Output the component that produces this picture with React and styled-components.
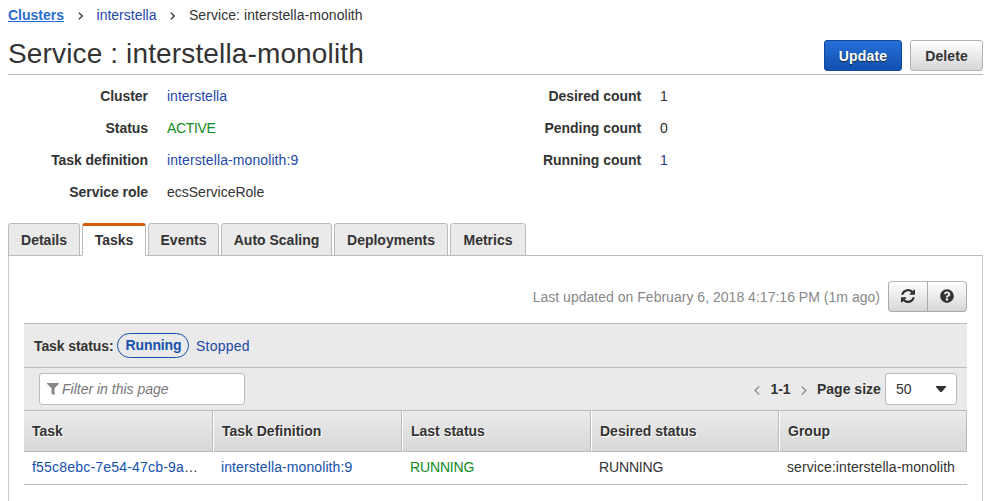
import React from "react";
import styled, { createGlobalStyle } from "styled-components";
import { FaQuestionCircle, FaFilter } from "react-icons/fa";

const GlobalStyle = createGlobalStyle`
  * { box-sizing: border-box; }
  html, body { margin: 0; background: #fff; overflow: hidden; }
  body {
    font-family: "Liberation Sans", Arial, sans-serif;
    font-size: 14px;
    line-height: 20px;
    color: #333;
  }
  button, input { font: inherit; color: inherit; }
`;

const Page = styled.div`
  width: 994px;
  height: 501px;
  padding: 5px 11px 0 8px;
  overflow: hidden;
  display: flex;
  flex-direction: column;
  & > * { flex-shrink: 0; }
`;

const Text = styled.span`
  letter-spacing: ${(p) => p.$ls || 0}px;
  white-space: nowrap;
`;

const Link = styled.a`
  color: ${(p) => p.$color || "#1e47a8"};
  text-decoration: none;
  white-space: nowrap;
  letter-spacing: ${(p) => p.$ls || 0}px;
`;

const HomeLink = styled(Link)`
  color: #2a6bd4;
  font-weight: bold;
  text-decoration: underline;
`;

const Breadcrumbs = styled.nav`
  display: flex;
  align-items: center;
  height: 20px;
`;

const Separator = styled.svg`
  width: 5px;
  height: 8px;
  margin: 2px 14px 0 13.5px;
  fill: none;
  stroke: #333;
  stroke-width: 1.3;
`;

const TitleBar = styled.header`
  display: flex;
  justify-content: space-between;
  height: 50px;
  padding-top: 15px;
  border-bottom: 1px solid #bbb;
`;

const Title = styled.h1`
  margin: -6px 0 0;
  font-size: 28px;
  line-height: 40px;
  font-weight: normal;
  white-space: nowrap;
  letter-spacing: 0.14px;
`;

const Actions = styled.div`
  display: flex;
  gap: 8px;
`;

const Button = styled.button`
  width: ${(p) => p.$w}px;
  height: 31px;
  padding: 1px 0 0;
  border: 1px solid #b3b3b3;
  border-radius: 3px;
  background: linear-gradient(#fff, #d6d6d6);
  font-weight: bold;
  letter-spacing: ${(p) => p.$ls || 0}px;
`;

const PrimaryButton = styled(Button)`
  border-color: #0f479f;
  background: linear-gradient(#2670d8, #1150af);
  color: #fff;
  text-shadow: 0 1px 1px #222;
`;

const Facts = styled.section`
  display: flex;
  height: 148px;
  padding-top: 11px;
`;

const FactList = styled.dl`
  display: grid;
  grid-template-columns: ${(p) => p.$label}px 326px;
  grid-auto-rows: 32px;
  column-gap: 19px;
  margin: 0;
  align-content: start;
`;

const FactName = styled.dt`
  font-weight: bold;
  text-align: right;
  letter-spacing: -0.06px;
`;

const FactValue = styled.dd`
  margin: 0;
  color: ${(p) => p.$color || "#333"};
  letter-spacing: ${(p) => p.$ls || 0}px;
`;

const Tabs = styled.nav`
  display: flex;
  gap: 2px;
  height: 33px;
  margin-bottom: -1px;
  z-index: 1;
`;

const Tab = styled.button`
  width: ${(p) => p.$w}px;
  padding: ${(p) => (p.$active ? "0 0 1px" : "1px 0 0")};
  border: 1px solid #bbb;
  border-top: ${(p) => (p.$active ? "3px solid #d45b07" : "1px solid #bbb")};
  border-bottom-color: ${(p) => (p.$active ? "#fff" : "#bbb")};
  border-radius: 3px 3px 0 0;
  background: ${(p) => (p.$active ? "#fff" : "#eaeaea")};
  font-weight: bold;
  white-space: nowrap;
`;

const Panel = styled.main`
  height: 260px;
  padding: 25px 15px 0;
  border: 1px solid #bbb;
  border-color: #bbb #ccc;
`;

const UpdatedRow = styled.div`
  display: flex;
  justify-content: flex-end;
  align-items: center;
  gap: 8px;
  height: 31px;
  color: #888;
`;

const IconGroup = styled.div`
  display: flex;
  width: 79px;
  height: 31px;
  border: 1px solid #aaa;
  border-top-color: #bbb;
  border-radius: 4px;
  background: linear-gradient(#fff, #d6d6d6);
`;

const IconButton = styled.button`
  display: flex;
  flex: 1;
  align-items: center;
  justify-content: center;
  padding: 0 0 1px;
  border: 0;
  background: none;
  color: #333;
  & + & { border-left: 1px solid #aaa; }
  svg { width: 14px; height: 14px; }
`;

const StatusBar = styled.div`
  display: flex;
  align-items: center;
  height: 44px;
  margin-top: 11px;
  padding-left: 10px;
  border-top: 1px solid #bbb;
  background: #eaeaea;
`;

const StatusLabel = styled.strong`
  width: 83px;
  padding-top: 1px;
  white-space: nowrap;
  letter-spacing: -0.1px;
`;

const StatusPill = styled.button`
  width: 72px;
  height: 25px;
  margin: 0 7px 1px 0;
  padding: 0 0 0 1px;
  border: 1px solid #1652ad;
  border-radius: 13px;
  background: none;
  color: #1652ad;
  font-weight: bold;
  letter-spacing: -0.1px;
`;

const FilterBar = styled.div`
  display: flex;
  justify-content: space-between;
  height: 43px;
  padding: 5px 10px 0 15px;
  border-top: 1px solid #bbb;
  background: #eaeaea;
`;

const FilterField = styled.label`
  display: flex;
  align-items: center;
  gap: 3px;
  width: 206px;
  height: 32px;
  padding: 0 7px;
  border: 1px solid #bbb;
  border-radius: 3px;
  background: #fff;
  color: #777;
  font-style: italic;
  svg { width: 12px; height: 12px; color: #888; margin-bottom: 1px; }
`;

const Pager = styled.div`
  display: flex;
  align-items: center;
  height: 32px;
  font-weight: bold;
`;

const PageArrow = styled.svg`
  width: 6px;
  height: 9px;
  margin-top: 3px;
  fill: none;
  stroke: #888;
  stroke-width: 1.2;
`;

const PageRange = styled.span`
  width: 41px;
  text-align: center;
`;

const PageSizeLabel = styled.span`
  width: 68px;
  margin-left: 10px;
  white-space: nowrap;
`;

const PageSize = styled.button`
  display: flex;
  align-items: center;
  justify-content: space-between;
  width: 72px;
  height: 32px;
  padding: 0 10px;
  border: 1px solid #bbb;
  border-radius: 3px;
  background: #fff;
  font-weight: normal;
`;

const Caret = styled.svg`
  width: 10px;
  height: 6px;
  fill: #333;
`;

const Grid = styled.div`
  display: grid;
  grid-template-columns: 189px 189px 189px 188px 188px;
`;

const HeadCell = styled.div`
  height: 42px;
  padding: 10px 8px 0;
  border: solid #bbb;
  border-width: 1px 1px 1px 0;
  background: linear-gradient(#ebebeb, #d8d8d8);
  font-weight: bold;
  text-shadow: 1px 1px 0 #fff;
  & + & { border-left: 1px solid #fff; }
`;

const Cell = styled.div`
  height: 33px;
  padding: 5px 0 0 8px;
  border-bottom: 1px solid #bbb;
  color: ${(p) => p.$color || "#333"};
  white-space: nowrap;
  letter-spacing: ${(p) => p.$ls || 0}px;
`;

const refreshPath =
  "M1511 928q0 5-1 7-64 268-268 434.5t-478 166.5q-146 0-282.5-55t-243.5-157l-129 129q-19 19-45 19t-45-19-19-45v-448q0-26 19-45t45-19h448q26 0 45 19t19 45-19 45l-137 137q71 66 161 102t187 36q134 0 250-65t186-179q11-17 53-117 8-23 30-23h192q13 0 22.5 9.5t9.5 22.5zm25-800v448q0 26-19 45t-45 19h-448q-26 0-45-19t-19-45 19-45l138-138q-148-137-349-137-134 0-250 65t-186 179q-11 17-53 117-8 23-30 23h-199q-13 0-22.5-9.5t-9.5-22.5v-7q65-268 270-434.5t480-166.5q146 0 284 55.5t245 156.5l130-129q19-19 45-19t45 19 19 45z";

const tabs = [
  { name: "Details", w: 72 },
  { name: "Tasks", w: 64, active: true },
  { name: "Events", w: 71 },
  { name: "Auto Scaling", w: 111 },
  { name: "Deployments", w: 114 },
  { name: "Metrics", w: 76 },
];

const columns = ["Task", "Task Definition", "Last status", "Desired status", "Group"];

const Chevron = () => (
  <Separator viewBox="0 0 5 8"><path d="M.7.6 4.2 4 .7 7.4" /></Separator>
);

export default function App() {
  return (
    <>
      <GlobalStyle />
      <Page>
        <Breadcrumbs>
          <HomeLink>Clusters</HomeLink>
          <Chevron />
          <Link>interstella</Link>
          <Chevron />
          <Text $ls={0.06}>Service: interstella-monolith</Text>
        </Breadcrumbs>
        <TitleBar>
          <Title>Service : interstella-monolith</Title>
          <Actions>
            <PrimaryButton $w={78} $ls={0.15}>Update</PrimaryButton>
            <Button $w={73} $ls={0.1}>Delete</Button>
          </Actions>
        </TitleBar>
        <Facts>
          <FactList $label={140}>
            <FactName>Cluster</FactName>
            <FactValue><Link>interstella</Link></FactValue>
            <FactName>Status</FactName>
            <FactValue $color="#128a22" $ls={-0.35}>ACTIVE</FactValue>
            <FactName>Task definition</FactName>
            <FactValue><Link $ls={0.1}>interstella-monolith:9</Link></FactValue>
            <FactName>Service role</FactName>
            <FactValue>ecsServiceRole</FactValue>
          </FactList>
          <FactList $label={148}>
            <FactName>Desired count</FactName>
            <FactValue>1</FactValue>
            <FactName>Pending count</FactName>
            <FactValue>0</FactValue>
            <FactName>Running count</FactName>
            <FactValue $color="#1e3f80">1</FactValue>
          </FactList>
        </Facts>
        <Tabs>
          {tabs.map((t) => (
            <Tab key={t.name} $w={t.w} $active={t.active}>{t.name}</Tab>
          ))}
        </Tabs>
        <Panel>
          <UpdatedRow>
            <Text $ls={0.02}>Last updated on February 6, 2018 4:17:16 PM (1m ago)</Text>
            <IconGroup>
              <IconButton aria-label="Refresh">
                <svg viewBox="0 0 1536 1536" fill="currentColor"><path d={refreshPath} /></svg>
              </IconButton>
              <IconButton aria-label="Help"><FaQuestionCircle /></IconButton>
            </IconGroup>
          </UpdatedRow>
          <StatusBar>
            <StatusLabel>Task status:</StatusLabel>
            <StatusPill>Running</StatusPill>
            <Link $ls={0.25}>Stopped</Link>
          </StatusBar>
          <FilterBar>
            <FilterField><FaFilter /><Text>Filter in this page</Text></FilterField>
            <Pager>
              <PageArrow viewBox="0 0 6 9"><path d="M5.3.5 1 4.5l4.3 4" /></PageArrow>
              <PageRange>1-1</PageRange>
              <PageArrow viewBox="0 0 6 9"><path d="M.7.5 5 4.5l-4.3 4" /></PageArrow>
              <PageSizeLabel>Page size</PageSizeLabel>
              <PageSize>
                50
                <Caret viewBox="0 0 10 6"><path d="M0 0h10v1L5.7 6H4.3L0 1z" /></Caret>
              </PageSize>
            </Pager>
          </FilterBar>
          <Grid>
            {columns.map((c) => <HeadCell key={c}>{c}</HeadCell>)}
            <Cell $ls={0.2}><Link $color="#1450ad" $ls={0.2}>f55c8ebc-7e54-47cb-9a</Link>…</Cell>
            <Cell><Link $color="#1450ad" $ls={0.1}>interstella-monolith:9</Link></Cell>
            <Cell $color="#128a22" $ls={-0.15}>RUNNING</Cell>
            <Cell $ls={-0.15}>RUNNING</Cell>
            <Cell $ls={0.08}>service:interstella-monolith</Cell>
          </Grid>
        </Panel>
      </Page>
    </>
  );
}
